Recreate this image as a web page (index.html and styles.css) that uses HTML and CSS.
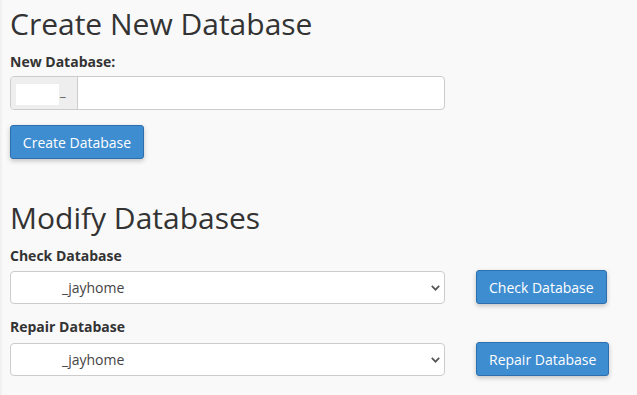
FILE: index.html
```html
<!DOCTYPE html>
<html>
<head>
<meta charset="utf-8">
<link rel="stylesheet" href="styles.css">
</head>
<body>
<div class="page">
  <h1 class="title">Create New Database</h1>
  <label class="label">New Database:</label>
  <div class="input-group">
    <div class="addon"><span class="redact redact-addon"></span><span class="us">_</span></div>
    <div class="input"></div>
  </div>
  <button class="btn btn-create">Create Database</button>

  <h1 class="title title-modify">Modify Databases</h1>
  <label class="label">Check Database</label>
  <div class="row">
    <div class="select"><span class="sel-text">_jayhome</span>
      <svg class="chev" width="9" height="6" viewBox="0 0 9 6"><path d="M0.8 0.9 L4.5 4.7 L8.2 0.9" fill="none" stroke="#555" stroke-width="1.7"/></svg>
    </div>
    <button class="btn btn-side">Check Database</button>
  </div>
  <label class="label label-repair">Repair Database</label>
  <div class="row">
    <div class="select"><span class="sel-text">_jayhome</span>
      <svg class="chev" width="9" height="6" viewBox="0 0 9 6"><path d="M0.8 0.9 L4.5 4.7 L8.2 0.9" fill="none" stroke="#555" stroke-width="1.7"/></svg>
    </div>
    <button class="btn btn-side">Repair Database</button>
  </div>
</div>
</body>
</html>
```
FILE: styles.css
```css
html, body {
  margin: 0;
  padding: 0;
  background: #f9f9f9;
}
body {
  font-family: "Open Sans", "Noto Sans", sans-serif;
  color: #333;
  border-left: 2px solid #f1f1f1;
  min-height: 395px;
  box-sizing: border-box;
}
.page {
  padding: 6px 10px 0 8px;
}
.title {
  font-size: 30px;
  font-weight: 400;
  line-height: 36px;
  margin: 0 0 10px 0;
  color: #333;
}
.title-modify {
  margin-top: 41px;
}
.label {
  display: block;
  font-size: 14px;
  font-weight: 700;
  line-height: 20px;
  margin-bottom: 4px;
  color: #333;
}
.label-repair {
  margin-top: 13px;
  margin-bottom: 5px;
}
.input-group {
  display: flex;
  width: 435px;
  height: 34px;
  box-sizing: border-box;
  border: 1px solid #ccc;
  border-radius: 4px;
  background: #fff;
  overflow: hidden;
}
.addon {
  width: 67px;
  background: #eee;
  border-right: 1px solid #ccc;
  display: flex;
  align-items: center;
  padding-left: 5px;
  box-sizing: border-box;
}
.redact {
  display: inline-block;
  background: #fff;
}
.redact-addon {
  width: 43px;
  height: 21px;
  margin-top: 2px;
}
.us {
  font-size: 13px;
  color: #555;
  margin-left: 1px;
  position: relative;
  top: -2px;
}
.input {
  flex: 1;
}
.btn {
  font-family: "Open Sans", "Noto Sans", sans-serif;
  font-size: 14px;
  color: #fff;
  background: #3e8dd0;
  border: 1px solid #2d6fae;
  border-radius: 3px;
  height: 34px;
  padding: 0 12px;
  box-shadow: 0 2px 5px rgba(0,0,0,0.22);
  cursor: pointer;
}
.btn-create {
  margin-top: 15px;
  width: 134px;
  padding: 0;
}
.row {
  display: flex;
  align-items: flex-start;
}
.select {
  width: 435px;
  height: 33px;
  box-sizing: border-box;
  border: 1px solid #ccc;
  border-radius: 4px;
  background: #fff;
  display: flex;
  align-items: center;
  padding-left: 51px;
  font-size: 14px;
  color: #444;
}
.label + .row .select {
  margin-top: 1px;
}
.sel-text {
  flex: 1;
}
.chev {
  margin-right: 4px;
}
.btn-side {
  margin-left: 31px;
  height: 34px;
  padding: 0 12px;
}
```
